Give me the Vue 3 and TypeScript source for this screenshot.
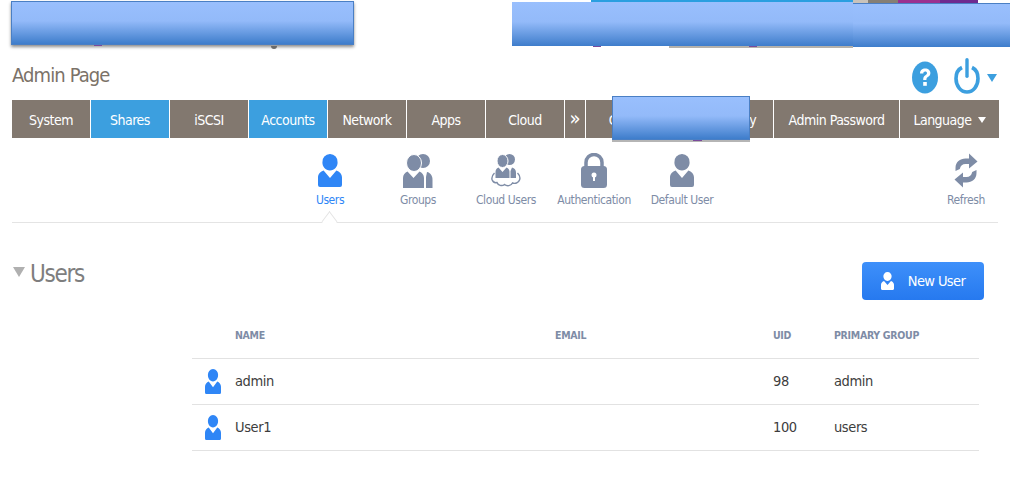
<script setup lang="ts">
interface Tab { label: string; width: number; active?: boolean; caret?: boolean; offset?: boolean }
interface SubItem { label: string; icon: string; active?: boolean }
interface UserRow { name: string; email: string; uid: number; group: string }

const tabs: Tab[] = [
  { label: 'System', width: 78 },
  { label: 'Shares', width: 78, active: true },
  { label: 'iSCSI', width: 78 },
  { label: 'Accounts', width: 78, active: true },
  { label: 'Network', width: 78 },
  { label: 'Apps', width: 78 },
  { label: 'Cloud', width: 78 },
  { label: '»', width: 20 },
  { label: 'Cloud Data Privacy Policy', width: 187, offset: true },
  { label: 'Admin Password', width: 125 },
  { label: 'Language', width: 99, caret: true },
]

const subItems: SubItem[] = [
  { label: 'Users', icon: 'user', active: true },
  { label: 'Groups', icon: 'group' },
  { label: 'Cloud Users', icon: 'cloud' },
  { label: 'Authentication', icon: 'lock' },
  { label: 'Default User', icon: 'user' },
]

const users: UserRow[] = [
  { name: 'admin', email: '', uid: 98, group: 'admin' },
  { name: 'User1', email: '', uid: 100, group: 'users' },
]

const personPath = 'M12 0a7.6 7.6 0 0 1 7.6 8.4c0 4-3 8-7.6 8s-7.6-4-7.6-8A7.6 7.6 0 0 1 12 0zM5.6 16.5 12 24l6.4-7.5c3 1 5.6 3.500 5.600 7V31a2 2 0 0 1-2 2H2a2 2 0 0 1-2-2v-7.500c0-3.500 2.600-6 5.600-7z'
</script>

<template>
  <div class="page">
    <div class="top-strip">
      <span class="strip-cyan"></span>
      <span class="strip-grey"></span>
      <span class="strip-magenta"></span>
    </div>
    <div class="cover cover-left"></div>
    <div class="cover cover-mid"></div>
    <div class="cover cover-right"></div>
    <div class="cover cover-nav"></div>
    <!-- bits of the blanked-out banner still showing under the blocks -->
    <span class="bit bit-a"></span>
    <span class="bit bit-b"></span>
    <span class="bit bit-c"></span>
    <span class="bit bit-d"></span>
    <span class="bit bit-tail"></span>
    <span class="under-line"></span>

    <header class="title-row">
      <h1>Admin Page</h1>
      <div class="title-icons">
        <svg class="help" width="26" height="33" viewBox="0 0 26 33">
          <ellipse cx="13" cy="16.500" rx="13" ry="16" fill="#3c9fdf" />
          <path d="M8 12.500c0-3.200 2.200-5 5.200-5 3 0 5.200 1.800 5.200 4.500 0 2-1 3-2.500 4-1.200.8-1.500 1.400-1.500 3h-3.200c0-2.500.6-3.600 2.200-4.700 1-.7 1.600-1.200 1.600-2.200 0-1-.7-1.700-1.800-1.700-1.200 0-1.900.8-1.900 2.100z" fill="#fff" />
          <rect x="11.200" y="21" width="3.600" height="3.800" fill="#fff" />
        </svg>
        <svg class="power" width="26" height="36" viewBox="0 0 26 36">
          <path d="M8 9.500C3.800 11.500 2 15.500 2 20.500 2 28 6.800 34 13 34s11-6 11-13.500c0-5-1.800-9-6-11" fill="none" stroke="#3c9fdf" stroke-width="3.600" />
          <rect x="11.300" y="0" width="3.400" height="20" rx="1.700" fill="#3c9fdf" />
        </svg>
        <span class="power-caret"></span>
      </div>
    </header>

    <nav class="tabs">
      <a
        v-for="tab in tabs"
        :key="tab.label"
        class="tab"
        :class="{ active: tab.active, chevron: tab.label === '»', offset: tab.offset }"
        :style="{ width: tab.width + 'px' }"
      >
        {{ tab.label }}<span v-if="tab.caret" class="tab-caret"></span>
      </a>
    </nav>

    <div class="subnav">
      <div
        v-for="item in subItems"
        :key="item.label"
        class="sub-item"
        :class="{ active: item.active }"
      >
        <svg v-if="item.icon === 'user'" width="24" height="35" viewBox="0 0 24 33">
          <path :d="personPath" fill="currentColor" />
        </svg>
        <svg v-else-if="item.icon === 'group'" width="30" height="35" viewBox="0 0 30 35">
          <circle cx="20" cy="8" r="7" fill="currentColor" />
          <ellipse cx="11" cy="10" rx="7.500" ry="8.500" fill="currentColor" stroke="#fff" stroke-width="1" />
          <path d="M4.500 18.500 10.500 25l6-6.500c2.500 1 4.500 3.500 4.500 6.500v10H0V25c0-3 2-5.500 4.500-6.500z" fill="currentColor" />
          <path d="M24 19c3.500.5 5.500 4 5.500 7.500V35H23V24z" fill="currentColor" />
        </svg>
        <svg v-else-if="item.icon === 'cloud'" width="30" height="35" viewBox="0 0 30 35">
          <circle cx="18.500" cy="6.500" r="5.500" fill="currentColor" />
          <ellipse cx="11.500" cy="8" rx="5.500" ry="6.500" fill="currentColor" stroke="#fff" stroke-width="1" />
          <path d="M7.500 14.500 11.500 19l4-4.500c2 .8 3 2.500 3 4.500v6h-14v-6c0-2 1-3.700 3-4.500z" fill="currentColor" />
          <path d="M21 14.500c2.500.5 4 2.500 4 5V25h-5.500v-7z" fill="currentColor" />
          <path d="M3.500 20C1.500 22 .5 24 1 26.500 1.800 29 4 30 6 29.500 7 32.500 11 33.500 13.500 31.500 16 33.500 20 33 21.500 30 24 31 27.500 30 28.500 27 29.500 24.500 28.500 22 26.500 20" fill="none" stroke="currentColor" stroke-width="1.400" />
        </svg>
        <svg v-else width="26" height="35" viewBox="0 0 26 35">
          <path d="M5 14V9.500a8 8 0 0 1 16 0V14" fill="none" stroke="currentColor" stroke-width="3.500" />
          <rect x="0" y="13" width="26" height="22" rx="3.500" fill="currentColor" />
          <circle cx="13" cy="22" r="2.500" fill="#fff" />
          <rect x="12" y="22" width="2" height="6" fill="#fff" />
        </svg>
        <span>{{ item.label }}</span>
      </div>
      <div class="sub-item refresh">
        <svg width="24" height="35" viewBox="0 0 24 35">
          <path d="M1.500 15C1.500 9 6 5.500 11.500 5.500H15V0.500L23.500 8.500 15 15.500V11H11.500C8.500 11 6.500 12.800 5.800 16L1.500 18z" fill="currentColor" />
          <path d="M22.500 20C22.500 26 18 29.500 12.500 29.500H9V34.500L.5 26.500 9 19.500V24H12.500C15.500 24 17.500 22.200 18.200 19L22.500 17z" fill="currentColor" />
        </svg>
        <span>Refresh</span>
      </div>
      <span class="notch"></span>
    </div>

    <section class="users">
      <div class="users-head">
        <h2><span class="head-caret"></span>Users</h2>
        <button class="new-user">
          <svg width="13" height="18" viewBox="0 0 24 33">
            <path :d="personPath" fill="#fff" />
          </svg>
          New User
        </button>
      </div>

      <div class="table">
        <div class="row head">
          <span></span>
          <span>NAME</span>
          <span>EMAIL</span>
          <span>UID</span>
          <span>PRIMARY GROUP</span>
        </div>
        <div v-for="user in users" :key="user.name" class="row">
          <span class="row-icon">
            <svg width="16" height="25" viewBox="0 0 24 33" preserveAspectRatio="none">
              <path :d="personPath" fill="#2f86f6" />
            </svg>
          </span>
          <span>{{ user.name }}</span>
          <span>{{ user.email }}</span>
          <span>{{ user.uid }}</span>
          <span>{{ user.group }}</span>
        </div>
      </div>
    </section>
  </div>
</template>

<style>
html,
body {
  margin: 0;
  background: #fff;
}
</style>

<style scoped>
.page {
  position: relative;
  width: 1014px;
  height: 486px;
  overflow: hidden;
  box-sizing: border-box;
  padding: 52px 16px 0 12px;
  font-family: "DejaVu Sans Condensed", "Noto Sans", sans-serif;
  color: #3d3d3d;
}

/* the blanked-out blocks and what peeks out round them */
.top-strip {
  position: absolute;
  top: 0;
  left: 591px;
  display: flex;
  height: 3px;
}
.strip-cyan {
  width: 262px;
  height: 2px;
  background: #2a9fe0;
}
.strip-grey {
  width: 45px;
  background: linear-gradient(90deg, #c9c3bb 0 33%, #857f75 33%);
}
.strip-magenta {
  width: 80px;
  background: linear-gradient(90deg, #9b3090 0 52%, #6e2a90 52%);
}
.cover {
  position: absolute;
  z-index: 2;
  background: linear-gradient(180deg, #99bffd 0%, #93baf9 45%, #3e7dcb 100%);
  box-sizing: border-box;
}
.cover-left {
  left: 11px;
  top: 1px;
  width: 343px;
  height: 44px;
  border: 1px solid #4a7fc4;
  box-shadow: 0 2px 3px rgba(0, 0, 0, 0.45);
}
.cover-mid {
  left: 512px;
  top: 2px;
  width: 341px;
  height: 44px;
}
.cover-right {
  left: 853px;
  top: 3px;
  width: 157px;
  height: 44px;
  border-top: 1px solid #4a7fc4;
}
.cover-nav {
  left: 612px;
  top: 96px;
  width: 138px;
  height: 44px;
  border: 1px solid #4a7fc4;
  box-shadow: 0 2px 0 #b5b5b5;
}
.bit {
  position: absolute;
  z-index: 3;
  height: 1px;
  background: #7a4a9c;
}
.bit-a {
  left: 94px;
  top: 45px;
  width: 8px;
}
.bit-b {
  left: 593px;
  top: 46px;
  width: 8px;
}
.bit-c {
  left: 749px;
  top: 46px;
  width: 8px;
}
.bit-d {
  left: 693px;
  top: 140px;
  width: 9px;
}
.bit-tail {
  left: 271px;
  top: 46px;
  width: 6px;
  height: 3px;
  background: #6a6a6a;
  border-radius: 0 0 3px 3px;
}
.under-line {
  position: absolute;
  left: 669px;
  top: 46px;
  width: 184px;
  height: 2px;
  background: #b4b1ab;
}

.title-row {
  display: flex;
  justify-content: space-between;
  align-items: center;
  height: 48px;
}
h1 {
  margin: 0 0 2px;
  font-size: 20px;
  font-weight: 400;
  letter-spacing: -0.9px;
  color: #7b7268;
}
.title-icons {
  display: flex;
  align-items: center;
  gap: 16px;
  margin-right: 1px;
  margin-top: 4px;
  height: 44px;
}
.help {
  margin-top: -2px;
}
.power {
  margin-top: -4px;
}
.power-caret {
  width: 0;
  height: 0;
  margin-left: -9px;
  border-left: 5px solid transparent;
  border-right: 5px solid transparent;
  border-top: 8px solid #3c9fdf;
}

.tabs {
  display: flex;
  gap: 1px;
  height: 38px;
}
.tab {
  display: flex;
  align-items: center;
  justify-content: center;
  flex: none;
  box-sizing: border-box;
  padding-top: 2px;
  background: #82786f;
  color: #fff;
  font-size: 14px;
  letter-spacing: -0.5px;
  white-space: nowrap;
}
.tab.active {
  background: #3c9fdf;
}
.tab.chevron {
  padding: 0 0 3px;
  font-size: 20px;
  letter-spacing: 0;
}
.tab.offset {
  padding-left: 6px;
}
.tab-caret {
  width: 0;
  height: 0;
  margin-left: 6px;
  border-left: 4px solid transparent;
  border-right: 4px solid transparent;
  border-top: 6px solid #fff;
}

.subnav {
  position: relative;
  display: flex;
  height: 85px;
  padding-left: 274px;
  border-bottom: 1px solid #e4e4e4;
  box-sizing: border-box;
}
.sub-item {
  display: flex;
  flex-direction: column;
  align-items: center;
  width: 88px;
  padding-top: 15px;
  color: #7e8ca6;
  font-size: 12px;
  letter-spacing: -0.4px;
}
.sub-item svg {
  height: 35px;
  margin-bottom: 3px;
}
.sub-item span {
  line-height: 18px;
  white-space: nowrap;
}
.sub-item.active {
  color: #2f86f6;
}
.refresh {
  margin-left: auto;
  width: 64px;
  color: #7e8ca6;
}
.notch {
  position: absolute;
  left: 311px;
  bottom: -6px;
  width: 12px;
  height: 12px;
  background: #fff;
  border-left: 1px solid #e4e4e4;
  border-top: 1px solid #e4e4e4;
  transform: rotate(45deg) skew(8deg, 8deg);
}

.users-head {
  display: flex;
  justify-content: space-between;
  align-items: flex-start;
  padding: 39px 2px 0 1px;
}
h2 {
  display: flex;
  align-items: center;
  margin: -2px 0 0;
  font-size: 24px;
  font-weight: 400;
  letter-spacing: -1.3px;
  color: #7e7e7e;
}
.head-caret {
  width: 0;
  height: 0;
  margin: 0 5px 4px 0;
  border-left: 6px solid transparent;
  border-right: 6px solid transparent;
  border-top: 10px solid #b0b0b0;
}
.new-user {
  display: flex;
  align-items: center;
  justify-content: center;
  gap: 14px;
  width: 122px;
  height: 38px;
  margin-right: 12px;
  border: 0;
  border-radius: 4px;
  background: linear-gradient(180deg, #3e90fa, #2679ef);
  color: #fff;
  font-family: inherit;
  font-size: 14.500px;
  letter-spacing: -0.6px;
}

.table {
  width: 787px;
  margin: 23px 0 0 180px;
}
.row {
  display: grid;
  grid-template-columns: 43px 320px 218px 61px 145px;
  align-items: center;
  height: 46px;
  padding-bottom: 1px;
  border-bottom: 1px solid #e2e2e2;
  box-sizing: border-box;
  font-size: 14.500px;
  letter-spacing: -0.4px;
}
.row.head {
  height: 36px;
  padding-bottom: 11px;
  color: #7e8ca6;
  font-size: 10.500px;
  font-weight: 700;
  letter-spacing: -0.3px;
}
.row-icon {
  display: flex;
  padding-left: 13px;
  margin-bottom: -1px;
}
</style>
